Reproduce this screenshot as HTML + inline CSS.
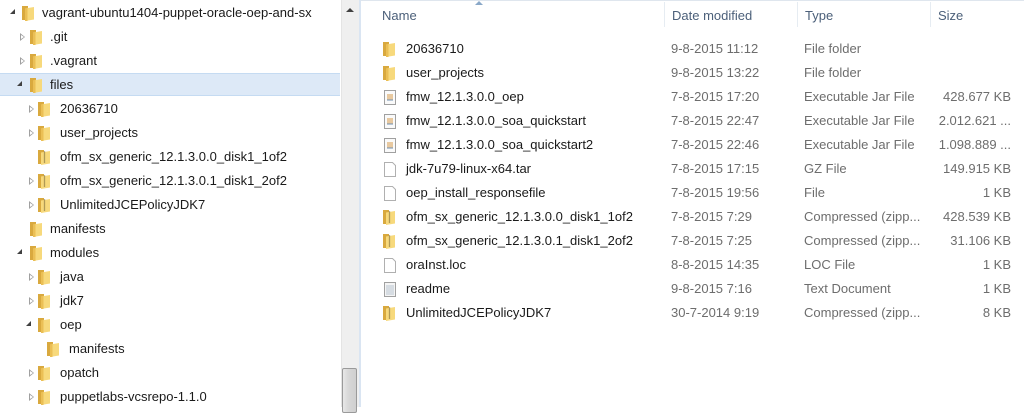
<!DOCTYPE html>
<html><head><meta charset="utf-8"><style>
body{margin:0;width:1024px;height:407px;overflow:hidden;background:#fff;font-family:"Liberation Sans",sans-serif;font-size:13px;color:#1a1a1a;position:relative}
.a{position:absolute;white-space:nowrap;line-height:16px}
.sel{position:absolute;left:0;top:73px;width:340px;height:23px;background:#dde9f7;border-top:1px solid #c5dbf2;border-bottom:1px solid #c5dbf2;box-sizing:border-box}
.ex{position:absolute;width:0;height:0;border-top:4px solid transparent;border-bottom:4px solid transparent;border-left:5px solid #a0a0a0}
.ex:after{content:"";position:absolute;left:-4px;top:-2px;border-top:2px solid transparent;border-bottom:2px solid transparent;border-left:3px solid #fff}
.op{position:absolute;width:0;height:0;border-left:5px solid transparent;border-bottom:5px solid #404040}
.f{position:absolute;width:15px;height:16px}
.g{color:#6d6d6d}
.h{color:#4c607a}
</style></head><body>
<svg width="0" height="0" style="position:absolute"><defs>
<g id="fd"><path d="M1 1h6v14H1z" fill="#d9a93e"/><path d="M4 3.5l9-1.5v12.5l-9 1.5z" fill="#f7d97c"/><path d="M4 3.5l2.5-1v13.5l-2.5 0z" fill="#ebbf55"/></g>
<g id="zp"><path d="M1 1h6v14H1z" fill="#d9a93e"/><path d="M4 3.5l9-1.5v12.5l-9 1.5z" fill="#f7d97c"/><path d="M7.5 2.5v12" stroke="#6a5a30" stroke-width="1.3" stroke-dasharray="1 1"/></g>
<g id="jr"><rect x="1.5" y="0.5" width="11" height="14" fill="#fafafa" stroke="#a0a0a0"/><rect x="4" y="4" width="6" height="6" fill="#e8c9a0"/><path d="M4 10h6" stroke="#7090b0"/></g>
<g id="bl"><path d="M1.5 .5h8l3 3v11h-11z" fill="#fff" stroke="#b0b0b0"/></g>
<g id="tx"><rect x="1.5" y="0.5" width="11" height="14" fill="#f4f4f4" stroke="#a0a0a0"/><path d="M3 4h8M3 6h8M3 8h8M3 10h8M3 12h8" stroke="#b8c4d0"/></g>
</defs></svg>

<div class="sel"></div>
<!-- tree -->
<div class="op" style="left:10px;top:9px"></div><svg class="f" style="left:21px;top:5px"><use href="#fd"/></svg><div class="a" style="left:42px;top:5px">vagrant-ubuntu1404-puppet-oracle-oep-and-sx</div>
<div class="ex" style="left:20px;top:33px"></div><svg class="f" style="left:29px;top:29px"><use href="#fd"/></svg><div class="a" style="left:50px;top:29px">.git</div>
<div class="ex" style="left:20px;top:57px"></div><svg class="f" style="left:29px;top:53px"><use href="#fd"/></svg><div class="a" style="left:50px;top:53px">.vagrant</div>
<div class="op" style="left:17px;top:81px"></div><svg class="f" style="left:29px;top:77px"><use href="#fd"/></svg><div class="a" style="left:50px;top:77px">files</div>
<div class="ex" style="left:29px;top:105px"></div><svg class="f" style="left:37px;top:101px"><use href="#fd"/></svg><div class="a" style="left:60px;top:101px">20636710</div>
<div class="ex" style="left:29px;top:129px"></div><svg class="f" style="left:37px;top:125px"><use href="#fd"/></svg><div class="a" style="left:60px;top:125px">user_projects</div>
<svg class="f" style="left:37px;top:149px"><use href="#zp"/></svg><div class="a" style="left:60px;top:149px">ofm_sx_generic_12.1.3.0.0_disk1_1of2</div>
<div class="ex" style="left:29px;top:177px"></div><svg class="f" style="left:37px;top:173px"><use href="#zp"/></svg><div class="a" style="left:60px;top:173px">ofm_sx_generic_12.1.3.0.1_disk1_2of2</div>
<div class="ex" style="left:29px;top:201px"></div><svg class="f" style="left:37px;top:197px"><use href="#zp"/></svg><div class="a" style="left:60px;top:197px">UnlimitedJCEPolicyJDK7</div>
<svg class="f" style="left:29px;top:221px"><use href="#fd"/></svg><div class="a" style="left:50px;top:221px">manifests</div>
<div class="op" style="left:17px;top:249px"></div><svg class="f" style="left:29px;top:245px"><use href="#fd"/></svg><div class="a" style="left:50px;top:245px">modules</div>
<div class="ex" style="left:29px;top:273px"></div><svg class="f" style="left:37px;top:269px"><use href="#fd"/></svg><div class="a" style="left:60px;top:269px">java</div>
<div class="ex" style="left:29px;top:297px"></div><svg class="f" style="left:37px;top:293px"><use href="#fd"/></svg><div class="a" style="left:60px;top:293px">jdk7</div>
<div class="op" style="left:26px;top:321px"></div><svg class="f" style="left:37px;top:317px"><use href="#fd"/></svg><div class="a" style="left:60px;top:317px">oep</div>
<svg class="f" style="left:46px;top:341px"><use href="#fd"/></svg><div class="a" style="left:69px;top:341px">manifests</div>
<div class="ex" style="left:29px;top:369px"></div><svg class="f" style="left:37px;top:365px"><use href="#fd"/></svg><div class="a" style="left:60px;top:365px">opatch</div>
<div class="ex" style="left:29px;top:393px"></div><svg class="f" style="left:37px;top:389px"><use href="#fd"/></svg><div class="a" style="left:60px;top:389px">puppetlabs-vcsrepo-1.1.0</div>

<!-- scrollbar -->
<div style="position:absolute;left:341px;top:0;width:18px;height:407px;background:#efefef;border-left:1px solid #e4e4e4;box-sizing:border-box"></div>
<div style="position:absolute;left:346px;top:8px;width:0;height:0;border-left:4px solid transparent;border-right:4px solid transparent;border-bottom:4px solid #404040"></div>
<div style="position:absolute;left:342px;top:368px;width:15px;height:45px;background:linear-gradient(90deg,#e8e8e8,#d8d8d8 40%,#cfcfcf);border:1px solid #9a9a9a;border-radius:2px;box-sizing:border-box"></div>
<div style="position:absolute;left:359px;top:0;width:2px;height:407px;background:#dae5f2"></div>

<!-- header -->
<div style="position:absolute;left:361px;top:0;width:663px;height:1px;background:#dfe6ee"></div>
<div style="position:absolute;left:475px;top:1px;width:0;height:0;border-left:4px solid transparent;border-right:4px solid transparent;border-bottom:4px solid #8aa8c8"></div>
<div style="position:absolute;left:664px;top:2px;width:1px;height:25px;background:#e6ecf2"></div>
<div style="position:absolute;left:797px;top:2px;width:1px;height:25px;background:#e6ecf2"></div>
<div style="position:absolute;left:930px;top:2px;width:1px;height:25px;background:#e6ecf2"></div>
<div class="a h" style="left:382px;top:8px">Name</div>
<div class="a h" style="left:672px;top:8px">Date modified</div>
<div class="a h" style="left:805px;top:8px">Type</div>
<div class="a h" style="left:938px;top:8px">Size</div>

<!-- rows -->
<svg class="f" style="left:382px;top:41px"><use href="#fd"/></svg><div class="a" style="left:406px;top:41px">20636710</div><div class="a g" style="left:671px;top:41px">9-8-2015 11:12</div><div class="a g" style="left:804px;top:41px">File folder</div>
<svg class="f" style="left:382px;top:65px"><use href="#fd"/></svg><div class="a" style="left:406px;top:65px">user_projects</div><div class="a g" style="left:671px;top:65px">9-8-2015 13:22</div><div class="a g" style="left:804px;top:65px">File folder</div>
<svg class="f" style="left:383px;top:90px"><use href="#jr"/></svg><div class="a" style="left:406px;top:89px">fmw_12.1.3.0.0_oep</div><div class="a g" style="left:671px;top:89px">7-8-2015 17:20</div><div class="a g" style="left:804px;top:89px">Executable Jar File</div><div class="a g" style="right:13px;top:89px">428.677 KB</div>
<svg class="f" style="left:383px;top:114px"><use href="#jr"/></svg><div class="a" style="left:406px;top:113px">fmw_12.1.3.0.0_soa_quickstart</div><div class="a g" style="left:671px;top:113px">7-8-2015 22:47</div><div class="a g" style="left:804px;top:113px">Executable Jar File</div><div class="a g" style="right:13px;top:113px">2.012.621 ...</div>
<svg class="f" style="left:383px;top:138px"><use href="#jr"/></svg><div class="a" style="left:406px;top:137px">fmw_12.1.3.0.0_soa_quickstart2</div><div class="a g" style="left:671px;top:137px">7-8-2015 22:46</div><div class="a g" style="left:804px;top:137px">Executable Jar File</div><div class="a g" style="right:13px;top:137px">1.098.889 ...</div>
<svg class="f" style="left:383px;top:162px"><use href="#bl"/></svg><div class="a" style="left:406px;top:161px">jdk-7u79-linux-x64.tar</div><div class="a g" style="left:671px;top:161px">7-8-2015 17:15</div><div class="a g" style="left:804px;top:161px">GZ File</div><div class="a g" style="right:13px;top:161px">149.915 KB</div>
<svg class="f" style="left:383px;top:186px"><use href="#bl"/></svg><div class="a" style="left:406px;top:185px">oep_install_responsefile</div><div class="a g" style="left:671px;top:185px">7-8-2015 19:56</div><div class="a g" style="left:804px;top:185px">File</div><div class="a g" style="right:13px;top:185px">1 KB</div>
<svg class="f" style="left:382px;top:209px"><use href="#zp"/></svg><div class="a" style="left:406px;top:209px">ofm_sx_generic_12.1.3.0.0_disk1_1of2</div><div class="a g" style="left:671px;top:209px">7-8-2015 7:29</div><div class="a g" style="left:804px;top:209px">Compressed (zipp...</div><div class="a g" style="right:13px;top:209px">428.539 KB</div>
<svg class="f" style="left:382px;top:233px"><use href="#zp"/></svg><div class="a" style="left:406px;top:233px">ofm_sx_generic_12.1.3.0.1_disk1_2of2</div><div class="a g" style="left:671px;top:233px">7-8-2015 7:25</div><div class="a g" style="left:804px;top:233px">Compressed (zipp...</div><div class="a g" style="right:13px;top:233px">31.106 KB</div>
<svg class="f" style="left:383px;top:258px"><use href="#bl"/></svg><div class="a" style="left:406px;top:257px">oraInst.loc</div><div class="a g" style="left:671px;top:257px">8-8-2015 14:35</div><div class="a g" style="left:804px;top:257px">LOC File</div><div class="a g" style="right:13px;top:257px">1 KB</div>
<svg class="f" style="left:383px;top:282px"><use href="#tx"/></svg><div class="a" style="left:406px;top:281px">readme</div><div class="a g" style="left:671px;top:281px">9-8-2015 7:16</div><div class="a g" style="left:804px;top:281px">Text Document</div><div class="a g" style="right:13px;top:281px">1 KB</div>
<svg class="f" style="left:382px;top:305px"><use href="#zp"/></svg><div class="a" style="left:406px;top:305px">UnlimitedJCEPolicyJDK7</div><div class="a g" style="left:671px;top:305px">30-7-2014 9:19</div><div class="a g" style="left:804px;top:305px">Compressed (zipp...</div><div class="a g" style="right:13px;top:305px">8 KB</div>
</body></html>
